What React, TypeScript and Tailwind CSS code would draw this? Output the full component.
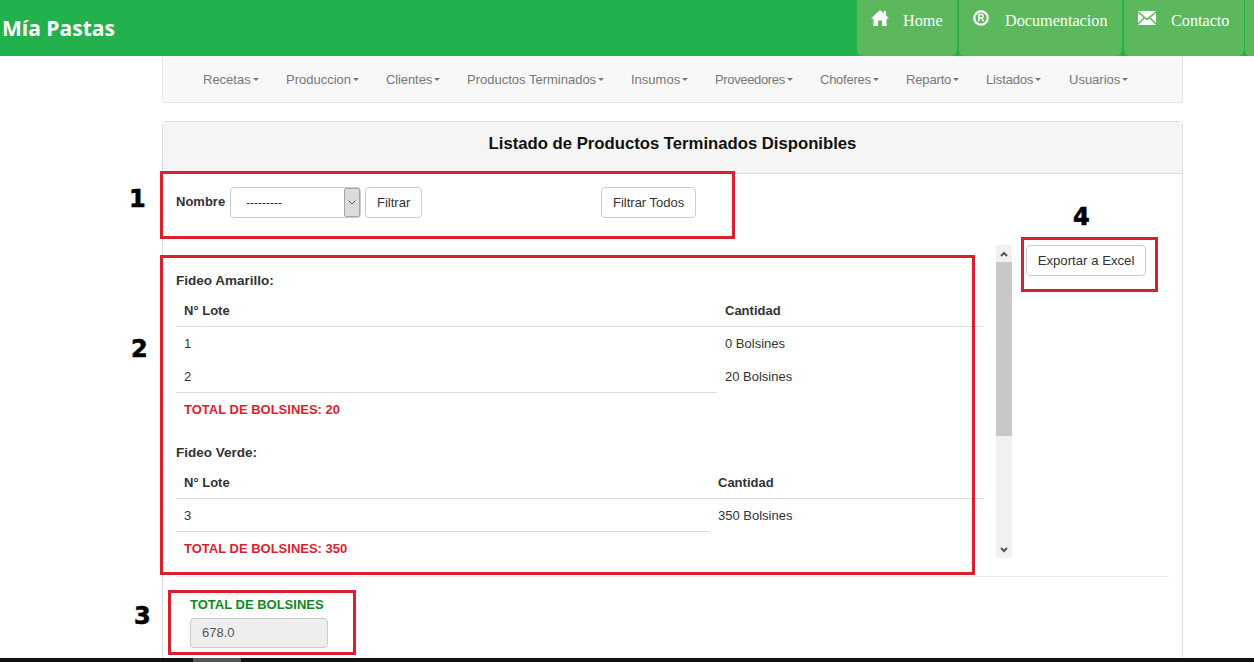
const subnav = [
  { label: "Recetas", width: "w-[83px]", tracking: "" },
  { label: "Produccion", width: "w-[100px]", tracking: "" },
  { label: "Clientes", width: "w-[81px]", tracking: "tracking-[-0.1px]" },
  { label: "Productos Terminados", width: "w-[164px]", tracking: "" },
  { label: "Insumos", width: "w-[84px]", tracking: "" },
  { label: "Proveedores", width: "w-[105px]", tracking: "tracking-[-0.35px]" },
  { label: "Choferes", width: "w-[86px]", tracking: "tracking-[-0.25px]" },
  { label: "Reparto", width: "w-[80px]", tracking: "tracking-[-0.15px]" },
  { label: "Listados", width: "w-[83px]", tracking: "tracking-[-0.15px]" },
  { label: "Usuarios", width: "w-[80px]", tracking: "" },
];

function HomeIcon() {
  return (
    <svg viewBox="0 0 18 16" className="h-[16px] w-[18px] fill-white">
      <path d="M9 0 L12.6 3.3 V1 H15 V5.6 L18 8.4 L15.6 8.4 L15.6 16 L11 16 L11 10.5 L7 10.5 L7 16 L2.4 16 L2.4 8.4 L0 8.4 Z" />
    </svg>
  );
}

function RegisteredIcon() {
  return (
    <svg viewBox="0 0 16 16" className="h-[16px] w-[16px]">
      <circle cx="8" cy="8" r="6.7" fill="none" stroke="#fff" strokeWidth="2.2" />
      <path d="M5.8 11.5 V4.6 H8.6 C10.6 4.6 10.8 7.8 8.8 8 L10.6 11.5 M5.8 8 H8.8" fill="none" stroke="#fff" strokeWidth="1.5" />
    </svg>
  );
}

function MailIcon() {
  return (
    <svg viewBox="0 0 18 14" className="h-[14px] w-[18px] fill-white">
      <path d="M0 0 H18 L9 7.6 Z" />
      <path d="M0 1.8 L5.4 6.5 L0 12 Z" />
      <path d="M18 1.8 L12.6 6.5 L18 12 Z" />
      <path d="M6.5 7.5 L9 9.6 L11.5 7.5 L18 14 H0 Z" />
    </svg>
  );
}

function TopLink({ icon, label, width, gap }: { icon: React.ReactNode; label: string; width: string; gap: string }) {
  return (
    <div className={`flex h-[56px] items-start rounded-b-[6px] bg-[#5cb85c] pl-[14px] pt-[10px] font-['Liberation_Serif',serif] text-[16.2px] leading-[22px] text-white ${width} ${gap}`}>
      <span className="flex h-[16px] items-center">{icon}</span>
      <span>{label}</span>
    </div>
  );
}

function Caret() {
  return <span className="ml-[2px] inline-block h-0 w-0 border-x-[3.5px] border-t-[3.5px] border-x-transparent border-t-[#777] align-middle" />;
}

function LotTable({ title, titleBox, firstCol, rows, total }: { title: string; titleBox: string; firstCol: string; rows: [string, string][]; total: string }) {
  return (
    <div>
      <p className={`text-[13.5px] font-bold leading-[20px] text-[#333] ${titleBox}`}>{title}</p>
      <table className="w-[807px] table-fixed border-collapse text-[13px] text-[#333]">
        <colgroup>
          <col className={firstCol} />
          <col />
        </colgroup>
        <thead>
          <tr className="border-b border-[#ddd]">
            <th className="h-[33px] px-2 pt-[2px] text-left font-bold">N° Lote</th>
            <th className="h-[33px] px-2 pt-[2px] text-left font-bold">Cantidad</th>
          </tr>
        </thead>
        <tbody>
          {rows.map(([lote, cantidad]) => (
            <tr key={lote}>
              <td className="h-[33px] px-2 pt-[2px]">{lote}</td>
              <td className="h-[33px] px-2 pt-[2px]">{cantidad}</td>
            </tr>
          ))}
          <tr>
            <td className="h-[33px] border-t border-[#ddd] px-2 pt-[2px] font-bold text-[#dc1f2d]">{total}</td>
            <td />
          </tr>
        </tbody>
      </table>
    </div>
  );
}

function Mark({ className }: { className: string }) {
  return <div className={`absolute border-[3px] border-[#d9202f] ${className}`} />;
}

function Digit({ n, className }: { n: string; className: string }) {
  return <span className={`absolute font-['DejaVu_Sans',sans-serif] text-[24px] font-bold leading-[24px] text-black [-webkit-text-stroke:0.6px_#000] ${className}`}>{n}</span>;
}

export default function App() {
  return (
    <div className="relative h-[662px] w-[1254px] overflow-hidden bg-white font-['Liberation_Sans',sans-serif] text-[#333]">
      <header className="flex h-[56px] items-start justify-between bg-[#23b14d]">
        <span className="pl-[2px] pt-[13px] font-['Open_Sans',sans-serif] text-[21px] font-bold leading-[30px] text-white">Mía Pastas</span>
        <nav className="flex gap-[2px]">
          <TopLink icon={<HomeIcon />} label="Home" width="w-[100px]" gap="gap-[14px]" />
          <TopLink icon={<RegisteredIcon />} label="Documentacion" width="w-[163px]" gap="gap-[16px]" />
          <TopLink icon={<MailIcon />} label="Contacto" width="w-[120px]" gap="gap-[15px]" />
          <div className="ml-[-1px] h-[56px] w-[9px] rounded-bl-[6px] bg-[#5cb85c]" />
        </nav>
      </header>

      <div className="ml-[162px] w-[1021px]">
        <nav className="flex h-[47px] items-center rounded-b-[4px] border border-t-0 border-[#e7e7e7] bg-[#f8f8f8] pl-[40px] pt-[1px] text-[13px] text-[#777]">
          {subnav.map((item) => (
            <span key={item.label} className={`flex shrink-0 items-center ${item.width} ${item.tracking}`}>
              {item.label}
              <Caret />
            </span>
          ))}
        </nav>

        <section className="mt-[18px] h-[561px] rounded-[4px] border border-[#ddd]">
          <h2 className="flex h-[52px] items-center justify-center border-b border-[#ddd] bg-[#f5f5f5] pb-[8px] text-[16.7px] font-bold text-[#111]">
            Listado de Productos Terminados Disponibles
          </h2>

          <div className="px-[13px]">
            <div className="flex h-[71px] items-start pt-[13px]">
              <span className="mt-[5px] text-[13px] font-bold leading-[20px]">Nombre</span>
              <div className="ml-[5px] flex h-[31px] w-[131px] items-center justify-between rounded-[4px] border border-[#ccc] pl-[15px] text-[12px]">
                <span>---------</span>
                <span className="flex h-full w-[16px] items-center justify-center rounded-[2px] border border-[#a6a6a6] bg-[#dcdcdc]">
                  <svg viewBox="0 0 8 5" className="h-[5px] w-[8px]">
                    <path d="M0.5 0.5 L4 4 L7.5 0.5" fill="none" stroke="#555" strokeWidth="1" />
                  </svg>
                </span>
              </div>
              <button type="button" className="ml-[4px] h-[31px] w-[57px] rounded-[4px] border border-[#ccc] text-[13px]">Filtrar</button>
              <button type="button" className="ml-[179px] h-[31px] w-[95px] rounded-[4px] border border-[#ccc] text-[13px]">Filtrar Todos</button>
            </div>

            <div className="flex h-[332px] items-start border-b border-[#eee]">
              <div className="h-[313px] w-[820px] overflow-hidden pt-[9px]">
                <LotTable title="Fideo Amarillo:" titleBox="h-[39px] pt-[17px]" firstCol="w-[541px]" rows={[["1", "0 Bolsines"], ["2", "20 Bolsines"]]} total="TOTAL DE BOLSINES: 20" />
                <LotTable title="Fideo Verde:" titleBox="h-[40px] pt-[18px]" firstCol="w-[534px]" rows={[["3", "350 Bolsines"]]} total="TOTAL DE BOLSINES: 350" />
              </div>
              <div className="flex h-[313px] w-[16px] flex-col items-center bg-[#f1f1f1]">
                <div className="flex h-[17px] items-center">
                  <svg viewBox="0 0 8 6" className="h-[6px] w-[8px]">
                    <path d="M1 5 L4 2 L7 5" fill="none" stroke="#555" strokeWidth="2" />
                  </svg>
                </div>
                <div className="h-[174px] w-full bg-[#c8c8c8]" />
                <div className="mt-auto flex h-[17px] items-center">
                  <svg viewBox="0 0 8 6" className="h-[6px] w-[8px]">
                    <path d="M1 1 L4 4 L7 1" fill="none" stroke="#555" strokeWidth="2" />
                  </svg>
                </div>
              </div>
              <button type="button" className="ml-[14px] h-[31px] w-[120px] rounded-[4px] border border-[#ccc] text-[13.2px]">Exportar a Excel</button>
            </div>

            <div className="pl-[14px] pt-[20px]">
              <p className="text-[13px] font-bold leading-[15px] text-[#0d8a1f]">TOTAL DE BOLSINES</p>
              <div className="mt-[6px] flex h-[30px] w-[138px] items-center rounded-[4px] border border-[#ccc] bg-[#eee] pl-[11px] text-[13px] text-[#555]">678.0</div>
            </div>
          </div>
        </section>
      </div>

      <Mark className="left-[160px] top-[171px] h-[68px] w-[575px]" />
      <Mark className="left-[160px] top-[255px] h-[320px] w-[815px]" />
      <Mark className="left-[168px] top-[590px] h-[65px] w-[188px]" />
      <Mark className="left-[1021px] top-[237px] h-[55px] w-[137px]" />
      <Digit n="1" className="left-[129px] top-[187px]" />
      <Digit n="2" className="left-[131px] top-[337px]" />
      <Digit n="3" className="left-[134px] top-[604px]" />
      <Digit n="4" className="left-[1073px] top-[205px]" />

      <div className="absolute bottom-0 left-0 flex h-[4px] w-full bg-[#111]">
        <div className="ml-[193px] h-full w-[48px] bg-[#555]" />
      </div>
    </div>
  );
}
